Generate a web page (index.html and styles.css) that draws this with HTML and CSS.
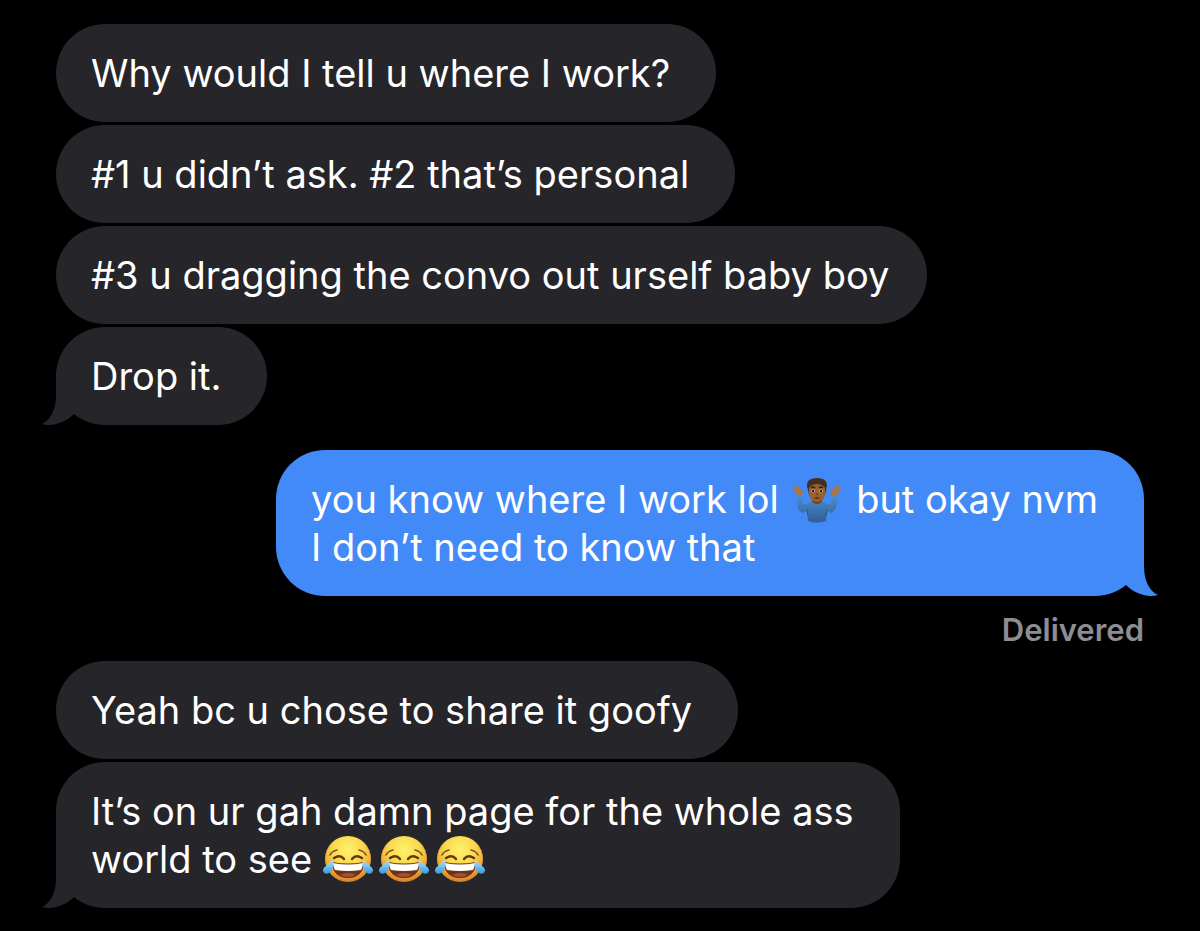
FILE: index.html
```html
<!DOCTYPE html>
<html lang="en">

<head>
    <meta charset="UTF-8" />
    <meta name="viewport" content="width=device-width, initial-scale=1.0" />
    <title>Messages</title>
    <link rel="stylesheet" href="styles.css">
</head>

<body>
    <!-- shared shapes -->
    <svg class="defs" aria-hidden="true">
        <defs>
            <radialGradient id="face" cx="0.5" cy="0.3" r="0.7">
                <stop offset="0" stop-color="#fff16e" />
                <stop offset="0.45" stop-color="#fadb50" />
                <stop offset="0.75" stop-color="#f0ad3c" />
                <stop offset="1" stop-color="#d87c28" />
            </radialGradient>
            <linearGradient id="tear" x1="0" y1="0" x2="0" y2="1">
                <stop offset="0" stop-color="#a9e3fb" />
                <stop offset="1" stop-color="#349be3" />
            </linearGradient>
            <linearGradient id="shirt" x1="0" y1="0" x2="0" y2="1">
                <stop offset="0" stop-color="#4b8fcd" />
                <stop offset="1" stop-color="#315e96" />
            </linearGradient>
            <symbol id="tail" viewBox="0 0 40 50">
                <path d="M14 0V20C14 34 9 45 0 49C12 52 24 47 32 39L40 20V0Z" />
            </symbol>
            <symbol id="joy" viewBox="0 0 50 48">
                <circle cx="25" cy="24" r="23" fill="url(#face)" />
                <path d="M7 20Q9 16 14 15M43 20Q41 16 36 15" fill="none" stroke="#80501b" stroke-width="1.6" stroke-linecap="round" />
                <path d="M11 23Q17 19 21 24M29 24Q33 19 39 23" fill="none" stroke="#643812" stroke-width="2.4" stroke-linecap="round" />
                <path d="M9 27Q25 30 41 27C41 37 35 43 25 43S9 37 9 27Z" fill="#6c3216" />
                <path d="M10 28Q25 31 40 28Q40 32 38 35Q25 37 12 35Q10 32 10 28Z" fill="#fff" />
                <path d="M17 40Q25 36 33 40Q25 44 17 40Z" fill="#a0532f" />
                <path d="M10 25C11 30 10 36 6 38C3 40 0 38 0 35C1 31 6 29 10 25Z" fill="url(#tear)" />
                <path d="M40 25C39 30 40 36 44 38C47 40 50 38 50 35C49 31 44 29 40 25Z" fill="url(#tear)" />
            </symbol>
        </defs>
    </svg>

    <main class="chat">
        <div class="group">
            <p class="bubble">Why would I tell u where I work?</p>
            <p class="bubble">#1 u didn’t ask. #2 that’s personal</p>
            <p class="bubble full">#3 u dragging the convo out urself baby boy</p>
            <p class="bubble">Drop it.<svg class="tail" aria-hidden="true"><use href="#tail" /></svg></p>
        </div>

        <div class="group sent">
            <p class="bubble">you know where I work lol
                <svg class="emoji shrug" viewBox="0 0 50 48" role="img" aria-label="man shrugging">
                    <path d="M5 20L10 20Q10 26 12 30Q17 26 25 26T38 30Q40 26 40 20L45 20C46 29 44 37 39 38L35 36L34 46Q25 49 16 46L15 36L11 38C6 37 4 29 5 20Z" fill="url(#shirt)" />
                    <path d="M15 34L16 41M35 34L34 41" stroke="#2d5788" stroke-width="1" fill="none" />
                    <path d="M20 23H30V27Q25 31 20 27Z" fill="#704322" />
                    <path d="M5 20L3 16L0 13Q0 11 2 12L4 13L3 10Q4 9 6 11L9 15L12 16Q13 18 10 18V20Z" fill="#a87448" />
                    <path d="M45 20L47 16L50 13Q50 11 48 12L46 13L47 10Q46 9 44 11L41 15L38 16Q37 18 40 18V20Z" fill="#a87448" />
                    <path d="M16 15C13 7 17 3 25 3S37 7 34 15L33 20H17Z" fill="#443023" />
                    <path d="M17 13Q20 9 25 9T33 13V18C33 24 29 27 25 27S17 24 17 18Z" fill="#97602f" />
                    <path d="M19 13Q21 11 23 13M27 13Q29 11 31 13" fill="none" stroke="#35210f" stroke-width="1.2" />
                    <ellipse cx="21" cy="16" rx="2" ry="1.4" fill="#e4dcd4" />
                    <ellipse cx="29" cy="16" rx="2" ry="1.4" fill="#e4dcd4" />
                    <circle cx="21" cy="16" r="1.3" fill="#28180c" />
                    <circle cx="29" cy="16" r="1.3" fill="#28180c" />
                    <path d="M24 19Q25 20 26 19" fill="none" stroke="#613716" stroke-width="1" />
                    <path d="M22 23Q25 21 28 23Q25 25 22 23Z" fill="#6d2f22" />
                </svg>
                but okay nvm<br>I don’t need to know that<svg class="tail" aria-hidden="true"><use href="#tail" /></svg></p>
            <p class="status">Delivered</p>
        </div>

        <div class="group">
            <p class="bubble">Yeah bc u chose to share it goofy</p>
            <p class="bubble">It’s on ur gah damn page for the whole ass<br>world to see
                <span class="emojis" role="img" aria-label="three faces with tears of joy"><svg class="emoji"><use href="#joy" /></svg><svg class="emoji"><use href="#joy" /></svg><svg class="emoji"><use href="#joy" /></svg></span><svg class="tail" aria-hidden="true"><use href="#tail" /></svg></p>
        </div>
    </main>
</body>

</html>
```

FILE: styles.css
```css
body {
    margin: 0;
    background: #000;
    color: #fff;
    font-family: Inter, "Liberation Sans", sans-serif;
    font-size: 38px;
    line-height: 48px;
}

.defs {
    position: absolute;
    width: 0;
    height: 0;
}

.chat {
    padding: 24px 56px;
}

.group {
    display: flex;
    flex-direction: column;
    align-items: flex-start;
    gap: 3px;
}

.sent {
    align-items: flex-end;
    gap: 16px;
    margin: 25px 0 13px;
}

.bubble {
    position: relative;
    margin: 0;
    padding: 25px 46px 25px 35px;
    border-radius: 49px;
    background: #26252a;
}

.full {
    padding-right: 38px;
}

.sent .bubble {
    background: #428af8;
}

.tail {
    position: absolute;
    left: -14px;
    bottom: 0;
    width: 40px;
    height: 50px;
    fill: #26252a;
}

.sent .tail {
    left: auto;
    right: -14px;
    fill: #428af8;
    transform: scaleX(-1);
}

.emoji {
    width: 50px;
    height: 48px;
    vertical-align: top;
}

.shrug {
    margin: 0 3px;
}

.emojis {
    display: inline-flex;
    gap: 6px;
    vertical-align: top;
}

.status {
    margin: 0;
    color: #8d8d93;
    font-size: 31px;
    font-weight: 600;
    line-height: 36px;
}
```
